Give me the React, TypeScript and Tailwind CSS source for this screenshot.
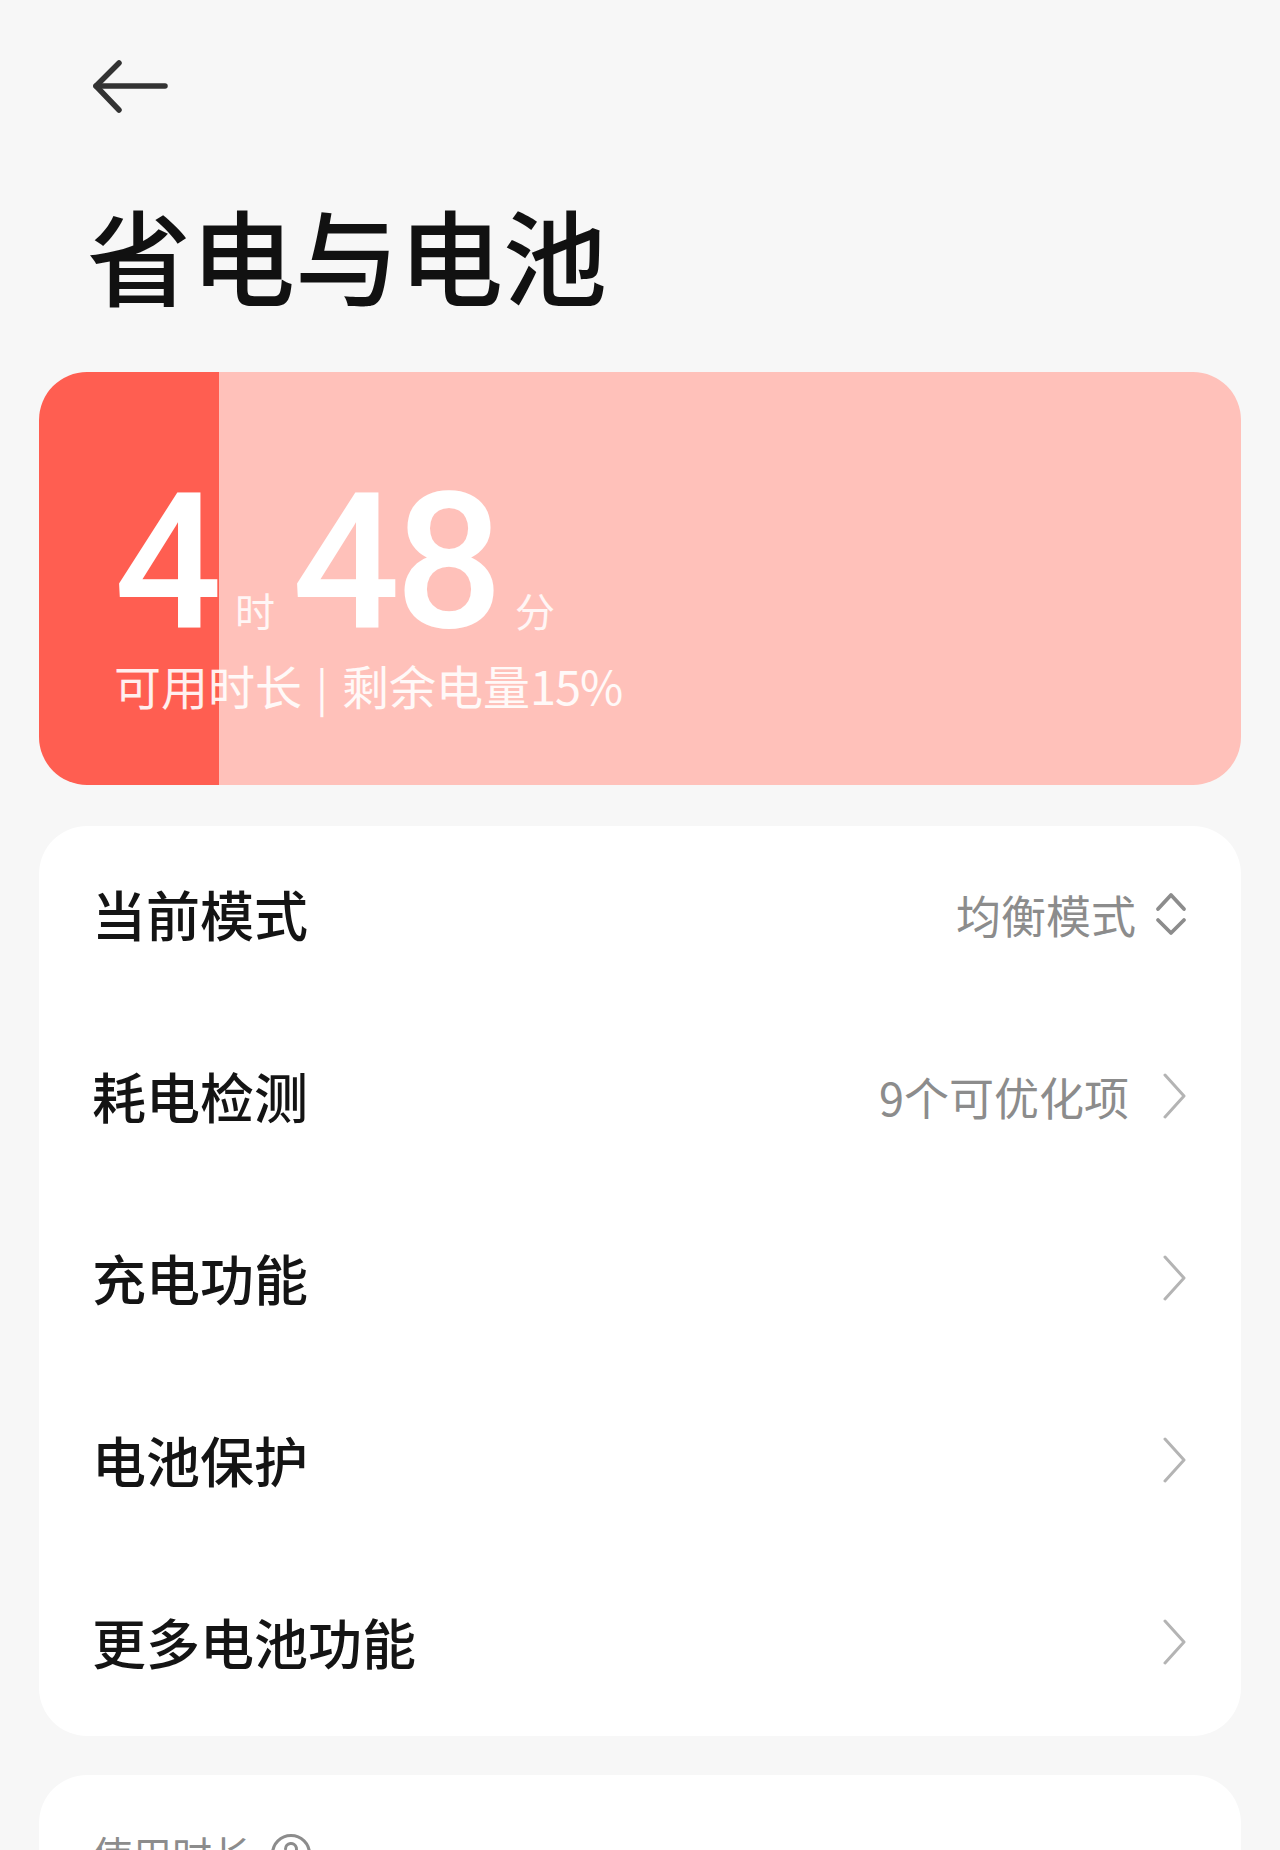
import React from "react";

const cjk = "font-['Noto_Sans_CJK_SC',sans-serif]";

const BackArrow = () => (
  <svg width="76" height="54" viewBox="0 0 76 54" fill="none" stroke="#333" strokeWidth="5.5" strokeLinecap="round" strokeLinejoin="round">
    <path d="M73 26H4" />
    <path d="M27 3L4 26L27 50" />
  </svg>
);

const ChevronRight = () => (
  <svg width="24" height="46" viewBox="0 0 24 46" fill="none" stroke="#b4b4b4" strokeWidth="3" strokeLinecap="round" strokeLinejoin="round">
    <path d="M2 2L21 23L2 44" />
  </svg>
);

const UpDown = () => (
  <svg width="32" height="48" viewBox="0 0 32 48" fill="none" stroke="#8c8c8c" strokeWidth="3.8" strokeLinecap="round" strokeLinejoin="round">
    <path d="M3 19L16 5L29 19" />
    <path d="M3 30L16 43L29 30" />
  </svg>
);

const HelpIcon = () => (
  <svg width="42" height="42" viewBox="0 0 42 42" fill="none" stroke="#8c8c8c" strokeWidth="3" strokeLinecap="round">
    <circle cx="21" cy="21" r="18.5" />
    <path d="M15.5 16a5.5 5.5 0 1 1 7.5 5.1c-1.4.6-2 1.6-2 3.2v1.2" />
    <path d="M21 30.5v.5" />
  </svg>
);

type Row = { label: string; value?: string; icon: "chevron" | "updown" };

const rows: Row[] = [
  { label: "当前模式", value: "均衡模式", icon: "updown" },
  { label: "耗电检测", value: "9个可优化项", icon: "chevron" },
  { label: "充电功能", icon: "chevron" },
  { label: "电池保护", icon: "chevron" },
  { label: "更多电池功能", icon: "chevron" },
];

export default function App() {
  const level = 15;

  return (
    <div className={`min-h-screen w-full bg-[#f7f7f7] ${cjk}`}>
      <div className="pt-[60px] pl-[92px]">
        <BackArrow />
      </div>

      <h1 className="mt-[88px] pl-[87px] text-[104px] leading-none font-medium text-[#111]">
        省电与电池
      </h1>

      <div
        className="mx-[39px] mt-[66px] h-[413px] rounded-[48px] pl-[75px] pt-[95px]"
        style={{ background: `linear-gradient(to right, #ff5e51 ${level}%, #ffc1ba ${level}%)` }}
      >
        <div className="flex items-baseline leading-none text-white">
          <span className="font-['Roboto',sans-serif] text-[190px] font-medium leading-none">4</span>
          <span className="ml-[13px] text-[40px] leading-none text-white/85">时</span>
          <span className="ml-[17px] font-['Roboto',sans-serif] text-[190px] font-medium leading-none tracking-[-5px]">
            48
          </span>
          <span className="ml-[17px] text-[40px] leading-none text-white/85">分</span>
        </div>
        <div className="mt-[4px] flex items-baseline text-[47px] leading-none text-white/90">
          <span>可用时长</span>
          <span className="mx-[14px] text-[44px]">|</span>
          <span>
            剩余电量<span className="tracking-[-1px]">{level}%</span>
          </span>
        </div>
      </div>

      <div className="mx-[39px] mt-[41px] rounded-[48px] bg-white">
        {rows.map((r) => (
          <div key={r.label} className="flex h-[182px] items-center justify-between pb-[6px] pl-[53px] pr-[54px]">
            <span className="text-[54px] leading-none font-medium text-[#141414]">{r.label}</span>
            <div className="flex items-center">
              {r.value && (
                <span className="text-[45px] leading-none text-[#8c8c8c]">{r.value}</span>
              )}
              {r.icon === "updown" ? (
                <span className="ml-[19px]">
                  <UpDown />
                </span>
              ) : (
                <span className="ml-[34px]">
                  <ChevronRight />
                </span>
              )}
            </div>
          </div>
        ))}
      </div>

      <div className="mx-[39px] mt-[39px] h-[320px] rounded-[48px] bg-white pl-[53px] pt-[58px]">
        <div className="flex items-center gap-[18px]">
          <span className="text-[40px] leading-none text-[#8c8c8c]">使用时长</span>
          <HelpIcon />
        </div>
      </div>
    </div>
  );
}
